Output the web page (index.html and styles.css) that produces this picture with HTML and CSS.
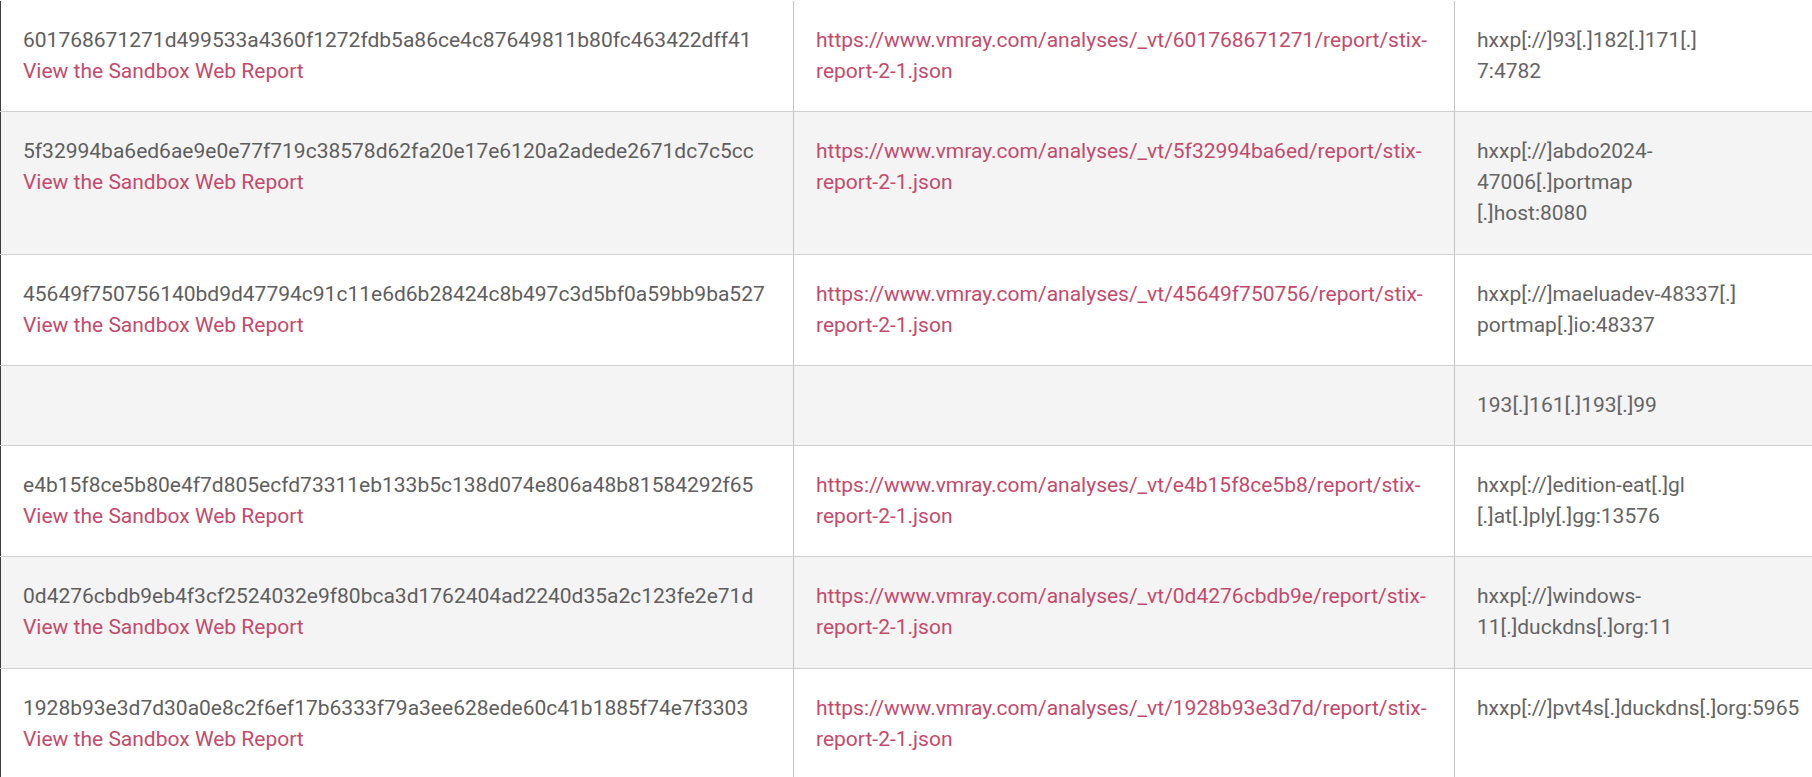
FILE: index.html
```html
<!DOCTYPE html>
<html lang="en">
<head>
<meta charset="utf-8">
<title>IOC table</title>
<link rel="stylesheet" href="styles.css">
</head>
<body>
<table class="ioc-table">
  <colgroup>
    <col class="col-hash">
    <col class="col-stix">
    <col class="col-c2">
  </colgroup>
  <tbody>
    <tr>
      <td><span class="hash">601768671271d499533a4360f1272fdb5a86ce4c87649811b80fc463422dff41</span><br><a class="link" href="#">View the Sandbox Web Report</a></td>
      <td><a class="link" href="#">https://www.vmray.com/analyses/_vt/601768671271/report/stix-<br>report-2-1.json</a></td>
      <td class="c2">hxxp[://]93[.]182[.]171[.]<br>7:4782</td>
    </tr>
    <tr>
      <td><span class="hash">5f32994ba6ed6ae9e0e77f719c38578d62fa20e17e6120a2adede2671dc7c5cc</span><br><a class="link" href="#">View the Sandbox Web Report</a></td>
      <td><a class="link" href="#">https://www.vmray.com/analyses/_vt/5f32994ba6ed/report/stix-<br>report-2-1.json</a></td>
      <td class="c2">hxxp[://]abdo2024-<br>47006[.]portmap<br>[.]host:8080</td>
    </tr>
    <tr>
      <td><span class="hash">45649f750756140bd9d47794c91c11e6d6b28424c8b497c3d5bf0a59bb9ba527</span><br><a class="link" href="#">View the Sandbox Web Report</a></td>
      <td><a class="link" href="#">https://www.vmray.com/analyses/_vt/45649f750756/report/stix-<br>report-2-1.json</a></td>
      <td class="c2">hxxp[://]maeluadev-48337[.]<br>portmap[.]io:48337</td>
    </tr>
    <tr>
      <td></td>
      <td></td>
      <td class="c2">193[.]161[.]193[.]99</td>
    </tr>
    <tr>
      <td><span class="hash">e4b15f8ce5b80e4f7d805ecfd73311eb133b5c138d074e806a48b81584292f65</span><br><a class="link" href="#">View the Sandbox Web Report</a></td>
      <td><a class="link" href="#">https://www.vmray.com/analyses/_vt/e4b15f8ce5b8/report/stix-<br>report-2-1.json</a></td>
      <td class="c2">hxxp[://]edition-eat[.]gl<br>[.]at[.]ply[.]gg:13576</td>
    </tr>
    <tr>
      <td><span class="hash">0d4276cbdb9eb4f3cf2524032e9f80bca3d1762404ad2240d35a2c123fe2e71d</span><br><a class="link" href="#">View the Sandbox Web Report</a></td>
      <td><a class="link" href="#">https://www.vmray.com/analyses/_vt/0d4276cbdb9e/report/stix-<br>report-2-1.json</a></td>
      <td class="c2">hxxp[://]windows-<br>11[.]duckdns[.]org:11</td>
    </tr>
    <tr>
      <td><span class="hash">1928b93e3d7d30a0e8c2f6ef17b6333f79a3ee628ede60c41b1885f74e7f3303</span><br><a class="link" href="#">View the Sandbox Web Report</a></td>
      <td><a class="link" href="#">https://www.vmray.com/analyses/_vt/1928b93e3d7d/report/stix-<br>report-2-1.json</a></td>
      <td class="c2">hxxp[://]pvt4s[.]duckdns[.]org:5965</td>
    </tr>
  </tbody>
</table>
</body>
</html>
```

FILE: styles.css
```css
html, body {
  margin: 0;
  padding: 0;
  background: #ffffff;
}

body {
  font-family: Roboto, "Liberation Sans", sans-serif;
  font-size: 21px;
  line-height: 31px;
  color: #5e5e5e;
  overflow: hidden;
  padding-top: 1px;
}

.ioc-table {
  border-collapse: collapse;
  table-layout: fixed;
  width: 1840px;
  border-left: 1px solid #3c3c3c;
}

.col-hash { width: 793px; }
.col-stix { width: 661px; }
.col-c2 { width: 386px; }

.ioc-table td {
  padding: 24px 22px 24.3px;
  vertical-align: top;
  white-space: nowrap;
  border-bottom: 1px solid #d0d0d0;
  border-right: 1px solid #c2c2c2;
  height: 31px;
}

.ioc-table tr:nth-child(even) td {
  background: #f4f4f4;
}

.ioc-table td.c2 {
  border-right: none;
  color: #646464;
}

.hash {
  color: #5e5e5e;
}

.link {
  color: #c24b6c;
  text-decoration: none;
}
```
